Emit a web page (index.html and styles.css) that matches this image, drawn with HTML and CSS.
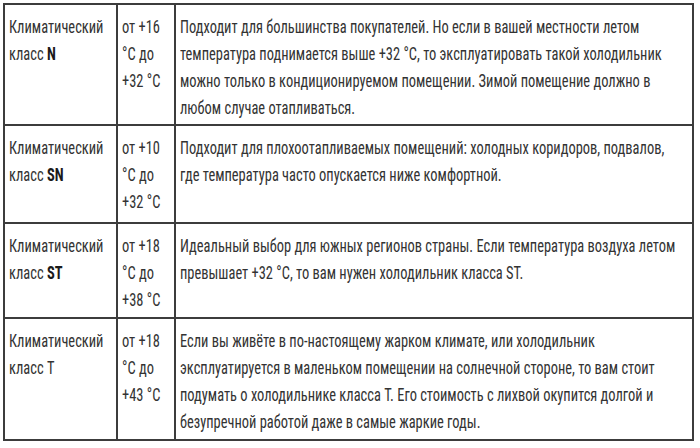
FILE: index.html
```html
<!DOCTYPE html>
<html lang="ru">
<head>
<meta charset="utf-8">
<link rel="stylesheet" href="styles.css">
</head>
<body>
<table class="climate">
  <tr class="row row-n">
    <td class="c-class"><div class="txt">Климатический<br>класс <b>N</b></div></td>
    <td class="c-temp"><div class="txt">от +16<br>°C до<br>+32 °C</div></td>
    <td class="c-desc"><div class="txt">Подходит для большинства покупателей. Но если в вашей местности летом<br>температура поднимается выше +32 °C, то эксплуатировать такой холодильник<br>можно только в кондиционируемом помещении. Зимой помещение должно в<br>любом случае отапливаться.</div></td>
  </tr>
  <tr class="row row-sn">
    <td class="c-class"><div class="txt">Климатический<br>класс <b>SN</b></div></td>
    <td class="c-temp"><div class="txt">от +10<br>°C до<br>+32 °C</div></td>
    <td class="c-desc"><div class="txt">Подходит для плохоотапливаемых помещений: холодных коридоров, подвалов,<br>где температура часто опускается ниже комфортной.</div></td>
  </tr>
  <tr class="row row-st">
    <td class="c-class"><div class="txt">Климатический<br>класс <b>ST</b></div></td>
    <td class="c-temp"><div class="txt">от +18<br>°C до<br>+38 °C</div></td>
    <td class="c-desc"><div class="txt">Идеальный выбор для южных регионов страны. Если температура воздуха летом<br>превышает +32 °C, то вам нужен холодильник класса ST.</div></td>
  </tr>
  <tr class="row row-t">
    <td class="c-class"><div class="txt">Климатический<br>класс T</div></td>
    <td class="c-temp"><div class="txt">от +18<br>°C до<br>+43 °C</div></td>
    <td class="c-desc"><div class="txt">Если вы живёте в по-настоящему жарком климате, или холодильник<br>эксплуатируется в маленьком помещении на солнечной стороне, то вам стоит<br>подумать о холодильнике класса T. Его стоимость с лихвой окупится долгой и<br>безупречной работой даже в самые жаркие годы.</div></td>
  </tr>
</table>
</body>
</html>
```
FILE: styles.css
```css
html, body {
  margin: 0;
  padding: 0;
  background: #fff;
}
body {
  padding: 3px 0 0 3px;
  width: 700px;
  height: 448px;
  box-sizing: border-box;
  overflow: hidden;
}
.climate {
  border-collapse: collapse;
  table-layout: fixed;
  width: 691px;
  font-family: "Roboto Condensed", "Liberation Sans", sans-serif;
  font-size: 19px;
  line-height: 27px;
  color: #333;
  border: 2px solid #3c3c3c;
}
.climate td {
  border: 2px solid #3c3c3c;
  vertical-align: top;
  padding: 8px 4px 0 4px;
}
.txt {
  white-space: nowrap;
  transform: scaleX(0.76);
  transform-origin: 0 0;
}
.climate b {
  font-weight: bold;
  color: #1a1a1a;
}
.c-class { width: 103px; padding-left: 3px; }
.c-temp { width: 48px; padding-left: 5px; }
.row-n { height: 121px; }
.row-sn { height: 98px; }
.row-st { height: 95px; }
.row-t { height: 122px; }
```
